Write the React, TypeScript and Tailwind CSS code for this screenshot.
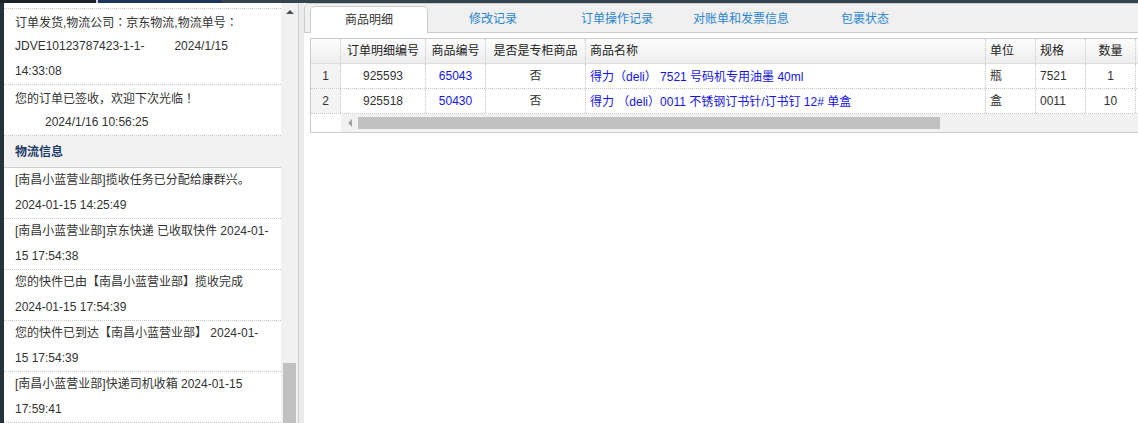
import React from "react";

const logs = [
  ["[南昌小蓝营业部]揽收任务已分配给康群兴。", "2024-01-15 14:25:49"],
  ["[南昌小蓝营业部]京东快递 已收取快件 2024-01-", "15 17:54:38"],
  ["您的快件已由【南昌小蓝营业部】揽收完成", "2024-01-15 17:54:39"],
  ["您的快件已到达【南昌小蓝营业部】 2024-01-", "15 17:54:39"],
  ["[南昌小蓝营业部]快递司机收箱 2024-01-15", "17:59:41"],
];

const tabs = ["商品明细", "修改记录", "订单操作记录", "对账单和发票信息", "包裹状态"];

type Col = { w: string; head: string; left?: boolean };
const cols: Col[] = [
  { w: "w-[85px]", head: "订单明细编号" },
  { w: "w-[60px]", head: "商品编号" },
  { w: "w-[100px]", head: "是否是专柜商品" },
  { w: "w-[400px]", head: "商品名称", left: true },
  { w: "w-[50px]", head: "单位", left: true },
  { w: "w-[50px]", head: "规格", left: true },
  { w: "w-[50px]", head: "数量" },
  { w: "w-[60px]", head: "" },
];

const rows = [
  ["925593", "65043", "否", "得力（deli） 7521 号码机专用油墨 40ml", "瓶", "7521", "1", ""],
  ["925518", "50430", "否", "得力 （deli）0011 不锈钢订书针/订书钉 12# 单盒", "盒", "0011", "10", ""],
];

const blueCols = [1, 3];

function P({ text }: { text: string }) {
  const parts = text.split(/([：（）！])/);
  return (
    <>
      {parts.map((p, i) =>
        /^[：（）！]$/.test(p) ? (
          <span key={i} className="font-['Noto_Sans_CJK_TC',sans-serif]">
            {p}
          </span>
        ) : (
          <React.Fragment key={i}>{p}</React.Fragment>
        )
      )}
    </>
  );
}

const line = "h-[25px] leading-[25px] overflow-hidden";

export default function App() {
  return (
    <div className="w-[1138px] h-[423px] overflow-hidden bg-white flex flex-col text-[12px] text-[#333] font-['Liberation_Sans','Noto_Sans_CJK_SC',sans-serif]">
      {/* top bar */}
      <div className="h-[3px] flex shrink-0">
        <div className="w-[96px] bg-[#1d2227]" />
        <div className="w-[2px] bg-[#cfd6de]" />
        <div className="w-[124px] bg-[#1e355a]" />
        <div className="flex-1 bg-[#36424e]" />
      </div>

      <div className="flex flex-1 min-h-0">
        <div className="w-[4px] shrink-0 bg-[#27313b]" />

        {/* left panel */}
        <div className="w-[277px] shrink-0 overflow-hidden bg-white">
          <div className="h-[6px] border-b border-dotted border-[#c8c8c8]" />
          <div className="border-b border-dotted border-[#c8c8c8] pl-[11px] whitespace-nowrap">
            <div className={line}>
              <P text="订单发货,物流公司：京东物流,物流单号：" />
            </div>
            <div className={line}>
              JDVE10123787423-1-1-<span className="ml-[30px]">2024/1/15</span>
            </div>
            <div className={line}>14:33:08</div>
          </div>
          <div className="border-b border-dotted border-[#c8c8c8] pl-[11px] whitespace-nowrap">
            <div className={line}>
              <P text="您的订单已签收，欢迎下次光临！" />
            </div>
            <div className={line}>
              <span className="ml-[30px]">2024/1/16 10:56:25</span>
            </div>
          </div>
          <div className="h-[32px] bg-[#f2f2f2] border-b border-[#cfcfcf] pl-[11px] flex items-center font-bold text-[#1b3b66]">
            物流信息
          </div>
          {logs.map(([a, b], i) => (
            <div key={i} className="border-b border-dotted border-[#c8c8c8] pl-[11px] whitespace-nowrap">
              <div className={line}>{a}</div>
              <div className={line}>{b}</div>
            </div>
          ))}
        </div>

        {/* left scrollbar */}
        <div className="w-[17px] shrink-0 bg-[#f1f1f1] flex flex-col">
          <div className="h-[17px] flex items-center justify-center">
            <div className="w-0 h-0 border-l-[4px] border-r-[4px] border-b-[4px] border-l-transparent border-r-transparent border-b-[#505050]" />
          </div>
          <div className="flex-1" />
          <div className="h-[60px] ml-[2px] w-[13px] bg-[#c1c1c1]" />
        </div>
        <div className="w-[1px] shrink-0 bg-[#cdcdcd]" />
        <div className="w-[5px] shrink-0 bg-[#ececec]" />

        {/* right panel */}
        <div className="flex-1 min-w-0 flex flex-col bg-white">
          <div className="h-[30px] shrink-0 bg-[#f0f0f0] border-l border-t border-b border-[#cccccc] rounded-tl-[5px] flex items-end pl-[5px] gap-[6px]">
            {tabs.map((t, i) =>
              i === 0 ? (
                <div
                  key={t}
                  className="w-[118px] h-[27px] -mb-px bg-white border border-b-0 border-[#cccccc] rounded-t-[5px] flex items-center justify-center text-[#333]"
                >
                  {t}
                </div>
              ) : (
                <div
                  key={t}
                  className="w-[118px] h-[27px] flex items-center justify-center text-[#2a85d0]"
                >
                  {t}
                </div>
              )
            )}
          </div>

          <div className="pl-[6px] pt-[5px] overflow-hidden">
            <div className="w-[900px] border border-[#cccccc]">
              {/* header */}
              <div className="h-[25px] flex border-b border-[#dcdcdc] bg-linear-to-b from-[#fdfdfd] to-[#eeeeee] text-[#222]">
                <div className="w-[30px] shrink-0 border-r border-dotted border-[#c8c8c8]" />
                {cols.map((c, i) => (
                  <div
                    key={i}
                    className={`${c.w} shrink-0 border-r border-dotted border-[#c8c8c8] flex items-center whitespace-nowrap ${
                      c.left ? "justify-start pl-[4px]" : "justify-center"
                    }`}
                  >
                    {c.head}
                  </div>
                ))}
              </div>
              {/* rows */}
              {rows.map((r, ri) => (
                <div key={ri} className="h-[25px] flex border-b border-dotted border-[#c8c8c8]">
                  <div className="w-[30px] shrink-0 border-r border-dotted border-[#c8c8c8] bg-[#f4f4f4] flex items-center justify-center text-[#333]">
                    {ri + 1}
                  </div>
                  {cols.map((c, ci) => (
                    <div
                      key={ci}
                      className={`${c.w} shrink-0 border-r border-dotted border-[#c8c8c8] flex items-center whitespace-nowrap ${
                        c.left ? "justify-start pl-[4px]" : "justify-center"
                      } ${blueCols.includes(ci) ? "text-[#1414e6]" : "text-[#333]"}`}
                    >
                      <span>
                        <P text={r[ci]} />
                      </span>
                    </div>
                  ))}
                </div>
              ))}
              {/* horizontal scrollbar */}
              <div className="h-[18px] flex">
                <div className="w-[30px] shrink-0 bg-white" />
                <div className="flex-1 bg-[#f1f1f1] flex items-center">
                  <div className="w-[17px] h-full shrink-0 flex items-center justify-center">
                    <div className="w-0 h-0 border-t-[4px] border-b-[4px] border-r-[4px] border-t-transparent border-b-transparent border-r-[#a3a3a3]" />
                  </div>
                  <div className="w-[582px] h-[12px] bg-[#c1c1c1]" />
                </div>
              </div>
            </div>
          </div>
        </div>
      </div>
    </div>
  );
}
